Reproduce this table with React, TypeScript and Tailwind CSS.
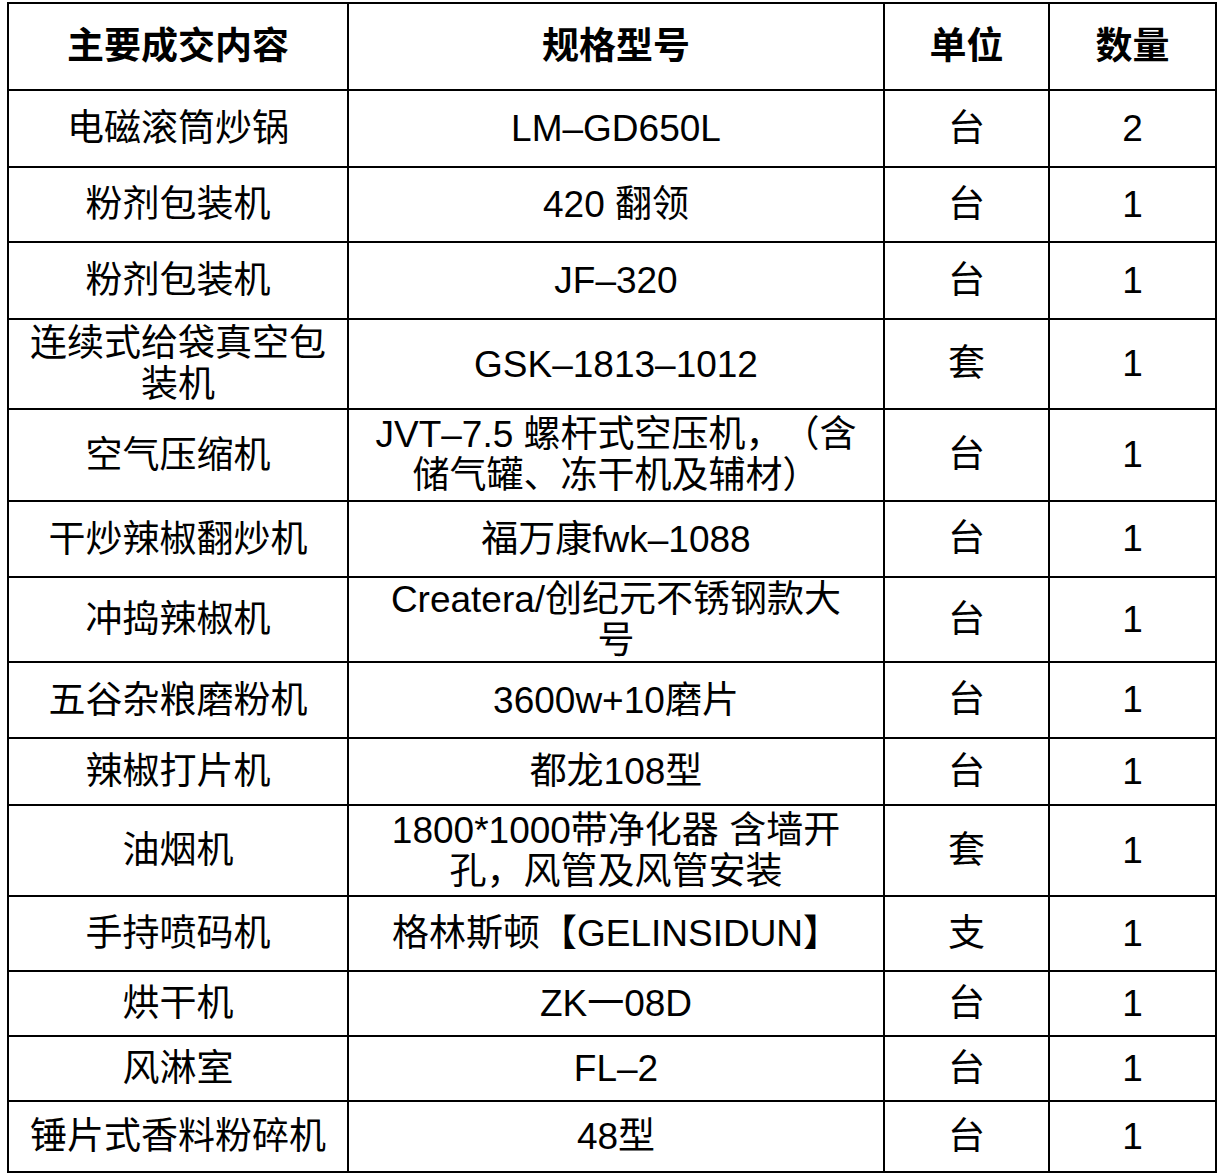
const rows: { name: string[]; spec: string[]; unit: string; qty: string; h: number }[] = [
  { name: ['电磁滚筒炒锅'], spec: ['LM–GD650L'], unit: '台', qty: '2', h: 77 },
  { name: ['粉剂包装机'], spec: ['420 翻领'], unit: '台', qty: '1', h: 75 },
  { name: ['粉剂包装机'], spec: ['JF–320'], unit: '台', qty: '1', h: 77 },
  { name: ['连续式给袋真空包', '装机'], spec: ['GSK–1813–1012'], unit: '套', qty: '1', h: 90 },
  { name: ['空气压缩机'], spec: ['JVT–7.5 螺杆式空压机，（含', '储气罐、冻干机及辅材）'], unit: '台', qty: '1', h: 92 },
  { name: ['干炒辣椒翻炒机'], spec: ['福万康fwk–1088'], unit: '台', qty: '1', h: 76 },
  { name: ['冲捣辣椒机'], spec: ['Createra/创纪元不锈钢款大', '号'], unit: '台', qty: '1', h: 85 },
  { name: ['五谷杂粮磨粉机'], spec: ['3600w+10磨片'], unit: '台', qty: '1', h: 76 },
  { name: ['辣椒打片机'], spec: ['都龙108型'], unit: '台', qty: '1', h: 67 },
  { name: ['油烟机'], spec: ['1800*1000带净化器 含墙开', '孔，风管及风管安装'], unit: '套', qty: '1', h: 91 },
  { name: ['手持喷码机'], spec: ['格林斯顿【GELINSIDUN】'], unit: '支', qty: '1', h: 75 },
  { name: ['烘干机'], spec: ['ZK一08D'], unit: '台', qty: '1', h: 65 },
  { name: ['风淋室'], spec: ['FL–2'], unit: '台', qty: '1', h: 65 },
  { name: ['锤片式香料粉碎机'], spec: ['48型'], unit: '台', qty: '1', h: 71 },
];

const cell = 'border-2 border-black p-0 text-center align-middle whitespace-nowrap';

function Lines({ lines }: { lines: string[] }) {
  return (
    <div className="leading-[41px]">
      {lines.map((l, i) => (
        <div key={i}>{l}</div>
      ))}
    </div>
  );
}

export default function App() {
  return (
    <div
      className="w-[1228px] h-[1174px] bg-white pl-[7px] pt-[2px] text-black text-[37px] [text-spacing-trim:space-all]"
      style={{ fontFamily: '"Liberation Sans", "Noto Sans CJK SC", sans-serif' }}
    >
      <table className="border-collapse table-fixed w-[1210px]">
        <colgroup>
          <col className="w-[340px]" />
          <col className="w-[536px]" />
          <col className="w-[165px]" />
          <col className="w-[167px]" />
        </colgroup>
        <thead>
          <tr className="h-[87px] font-bold">
            <th className={cell}>主要成交内容</th>
            <th className={cell}>规格型号</th>
            <th className={cell}>单位</th>
            <th className={cell}>数量</th>
          </tr>
        </thead>
        <tbody>
          {rows.map((r, i) => (
            <tr key={i} style={{ height: r.h }}>
              <td className={cell}>
                <Lines lines={r.name} />
              </td>
              <td className={cell}>
                <Lines lines={r.spec} />
              </td>
              <td className={cell}>{r.unit}</td>
              <td className={cell}>{r.qty}</td>
            </tr>
          ))}
        </tbody>
      </table>
    </div>
  );
}
